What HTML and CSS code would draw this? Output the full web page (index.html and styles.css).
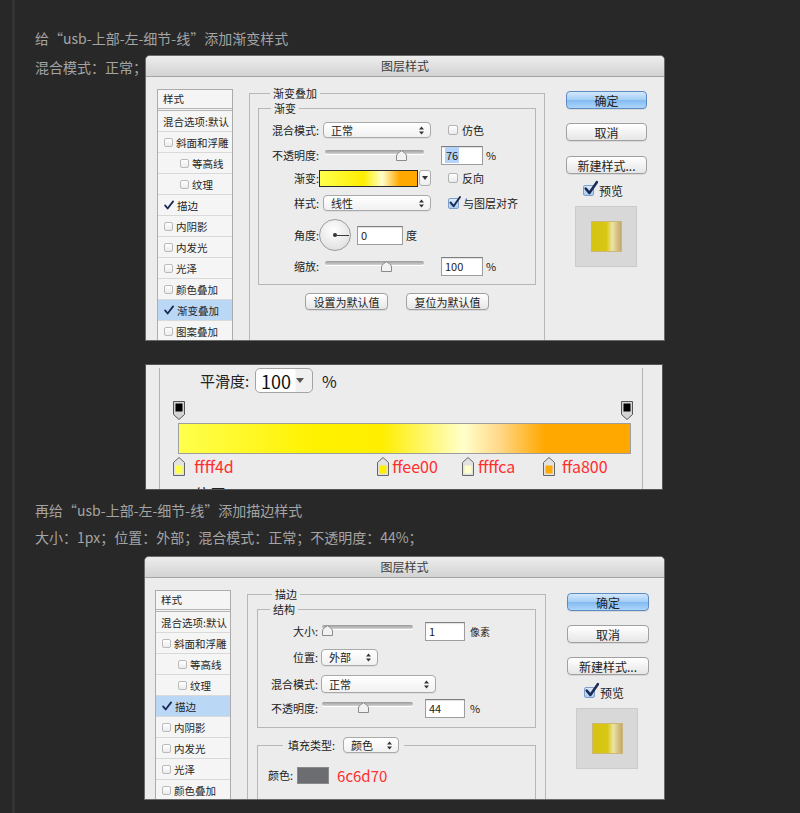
FILE: index.html
```html
<!DOCTYPE html>
<html lang="zh-CN">
<head>
<meta charset="utf-8">
<title>图层样式</title>
<link rel="stylesheet" href="styles.css">
</head>
<body>
<div class="page">
<div class="rail">
  <p class="note">给“usb-上部-左-细节-线”添加渐变样式</p>
  <div class="note-row">
    <p class="note note-side">混合模式：正常；</p>
    <div class="dialog dialog-1">
      <div class="titlebar">图层样式</div>
      <div class="dbody">
        <ul class="list">
          <li class="li li-head">样式</li>
          <li class="li">混合选项:默认</li>
          <li class="li"><span class="cb"></span>斜面和浮雕</li>
          <li class="li li-sub"><span class="cb"></span>等高线</li>
          <li class="li li-sub"><span class="cb"></span>纹理</li>
          <li class="li"><svg class="ck" viewBox="0 0 11 10"><path d="M1.2 5.4 L4 8.8 L10 1" /></svg>描边</li>
          <li class="li"><span class="cb"></span>内阴影</li>
          <li class="li"><span class="cb"></span>内发光</li>
          <li class="li"><span class="cb"></span>光泽</li>
          <li class="li"><span class="cb"></span>颜色叠加</li>
          <li class="li li-on"><svg class="ck" viewBox="0 0 11 10"><path d="M1.2 5.4 L4 8.8 L10 1" /></svg>渐变叠加</li>
          <li class="li li-last"><span class="cb"></span>图案叠加</li>
        </ul>
        <div class="main">
          <fieldset class="fs fs-outer">
            <legend>渐变叠加</legend>
            <fieldset class="fs fs-inner">
              <legend>渐变</legend>
              <div class="row">
                <span class="lbl">混合模式:</span>
                <div class="sel sel-mode"><span>正常</span><svg class="arr" viewBox="0 0 5 9"><path d="M0 3.6 L2.5 0.6 L5 3.6Z M0 5.4 L2.5 8.4 L5 5.4Z"/></svg></div>
                <span class="cbx cbx-gap"></span><span class="cbl">仿色</span>
              </div>
              <div class="row r-opacity">
                <span class="lbl">不透明度:</span>
                <div class="slider slider-1"><span class="track"></span><svg class="thumb" style="left:71px" viewBox="0 0 11 11"><path d="M0.5 10.5 V6 Q0.5 4 2.5 2.8 L5.5 0.7 L8.5 2.8 Q10.5 4 10.5 6 V10.5 Z"/></svg></div>
                <div class="inp inp-1"><span class="selected">76</span></div><span class="unit">%</span>
              </div>
              <div class="row r-grad">
                <span class="lbl">渐变:</span>
                <span class="grad-swatch"></span>
                <span class="grad-drop"><svg class="caret" viewBox="0 0 6 4"><path d="M0 0 H6 L3 4Z"/></svg></span>
                <span class="cbx cbx-gap"></span><span class="cbl">反向</span>
              </div>
              <div class="row r-style">
                <span class="lbl">样式:</span>
                <div class="sel sel-mode"><span>线性</span><svg class="arr" viewBox="0 0 5 9"><path d="M0 3.6 L2.5 0.6 L5 3.6Z M0 5.4 L2.5 8.4 L5 5.4Z"/></svg></div>
                <span class="cbx cbx-gap cbx-blue cbx-on"><svg class="ck2" viewBox="0 0 12 12"><path d="M1.5 6.5 L4.6 10.2 L11 1" /></svg></span><span class="cbl">与图层对齐</span>
              </div>
              <div class="row r-angle">
                <span class="lbl">角度:</span>
                <span class="dial"></span>
                <div class="inp inp-angle">0</div><span class="unit">度</span>
              </div>
              <div class="row r-scale">
                <span class="lbl">缩放:</span>
                <div class="slider slider-1"><span class="track"></span><svg class="thumb" style="left:56px" viewBox="0 0 11 11"><path d="M0.5 10.5 V6 Q0.5 4 2.5 2.8 L5.5 0.7 L8.5 2.8 Q10.5 4 10.5 6 V10.5 Z"/></svg></div>
                <div class="inp inp-1">100</div><span class="unit">%</span>
              </div>
            </fieldset>
            <div class="defaults">
              <div class="btn btn-sm">设置为默认值</div>
              <div class="btn btn-sm">复位为默认值</div>
            </div>
          </fieldset>
        </div>
        <div class="side">
          <div class="btn btn-primary">确定</div>
          <div class="btn btn-g1">取消</div>
          <div class="btn btn-g2">新建样式...</div>
          <div class="pv-row"><span class="cbx cbx-blue cbx-on"><svg class="ck3" viewBox="0 0 12 12"><path d="M1.5 6.5 L4.6 10.2 L11 1" /></svg></span><span class="pv-lbl">预览</span></div>
          <div class="pv-box"><span class="pv-swatch"></span></div>
        </div>
      </div>
    </div>
  </div>

  <div class="ge">
    <div class="ge-fs">
      <div class="smooth-row">
        <span class="smooth-lbl">平滑度:</span>
        <div class="smooth-sel"><span>100</span><svg class="caret2" viewBox="0 0 8 5"><path d="M0 0 H8 L4 5Z"/></svg></div>
        <span class="smooth-unit">%</span>
      </div>
      <div class="stops stops-top">
        <svg class="mk" style="--pos:0.3%" viewBox="0 0 12 19"><path d="M0.5 0.5 H11.5 V13.5 L6 18.5 L0.5 13.5 Z" fill="#d4d4d4" stroke="#555"/><rect x="2.5" y="2.5" width="7" height="8" fill="#000"/></svg>
        <svg class="mk" style="--pos:99.2%" viewBox="0 0 12 19"><path d="M0.5 0.5 H11.5 V13.5 L6 18.5 L0.5 13.5 Z" fill="#d4d4d4" stroke="#555"/><rect x="2.5" y="2.5" width="7" height="8" fill="#000"/></svg>
      </div>
      <div class="bar"></div>
      <div class="stops stops-bot">
        <div class="stop" style="--pos:0.3%;--gap:9px"><svg class="mk2" viewBox="0 0 12 19"><path d="M0.5 18.5 V5.5 L6 0.5 L11.5 5.5 V18.5 Z" fill="#e2e2e2" stroke="#666"/><rect x="2.5" y="8.5" width="7" height="8" fill="#ffff4d"/></svg><span class="hexr">ffff4d</span></div>
        <div class="stop" style="--pos:45.3%;--gap:3px"><svg class="mk2" viewBox="0 0 12 19"><path d="M0.5 18.5 V5.5 L6 0.5 L11.5 5.5 V18.5 Z" fill="#e2e2e2" stroke="#666"/><rect x="2.5" y="8.5" width="7" height="8" fill="#ffee00"/></svg><span class="hexr">ffee00</span></div>
        <div class="stop" style="--pos:64%;--gap:4px"><svg class="mk2" viewBox="0 0 12 19"><path d="M0.5 18.5 V5.5 L6 0.5 L11.5 5.5 V18.5 Z" fill="#e2e2e2" stroke="#666"/><rect x="2.5" y="8.5" width="7" height="8" fill="#ffffca"/></svg><span class="hexr">ffffca</span></div>
        <div class="stop" style="--pos:81.9%;--gap:7px"><svg class="mk2" viewBox="0 0 12 19"><path d="M0.5 18.5 V5.5 L6 0.5 L11.5 5.5 V18.5 Z" fill="#e2e2e2" stroke="#666"/><rect x="2.5" y="8.5" width="7" height="8" fill="#ffa800"/></svg><span class="hexr">ffa800</span></div>
      </div>
      <div class="cut-row"><span class="cut-text">位置:</span></div>
    </div>
  </div>

  <p class="note note-3">再给“usb-上部-左-细节-线”添加描边样式</p>
  <p class="note note-4">大小：1px；位置：外部；混合模式：正常；不透明度：44%；</p>

  <div class="dialog dialog-3">
    <div class="titlebar">图层样式</div>
    <div class="dbody">
      <ul class="list">
        <li class="li li-head">样式</li>
        <li class="li">混合选项:默认</li>
        <li class="li"><span class="cb"></span>斜面和浮雕</li>
        <li class="li li-sub"><span class="cb"></span>等高线</li>
        <li class="li li-sub"><span class="cb"></span>纹理</li>
        <li class="li li-on"><svg class="ck" viewBox="0 0 11 10"><path d="M1.2 5.4 L4 8.8 L10 1" /></svg>描边</li>
        <li class="li"><span class="cb"></span>内阴影</li>
        <li class="li"><span class="cb"></span>内发光</li>
        <li class="li"><span class="cb"></span>光泽</li>
        <li class="li li-last"><span class="cb"></span>颜色叠加</li>
      </ul>
      <div class="main">
        <fieldset class="fs fs-outer fs-outer-3">
          <legend>描边</legend>
          <fieldset class="fs fs-inner fs-inner-3">
            <legend>结构</legend>
            <div class="row">
              <span class="lbl">大小:</span>
              <div class="slider slider-3"><span class="track"></span><svg class="thumb" style="left:0px" viewBox="0 0 11 11"><path d="M0.5 10.5 V6 Q0.5 4 2.5 2.8 L5.5 0.7 L8.5 2.8 Q10.5 4 10.5 6 V10.5 Z"/></svg></div>
              <div class="inp inp-3">1</div><span class="unit unit-3 unit-px">像素</span>
            </div>
            <div class="row r3-pos">
              <span class="lbl">位置:</span>
              <div class="sel sel-pos"><span>外部</span><svg class="arr" viewBox="0 0 5 9"><path d="M0 3.6 L2.5 0.6 L5 3.6Z M0 5.4 L2.5 8.4 L5 5.4Z"/></svg></div>
            </div>
            <div class="row r3-mode">
              <span class="lbl">混合模式:</span>
              <div class="sel sel-mode3"><span>正常</span><svg class="arr" viewBox="0 0 5 9"><path d="M0 3.6 L2.5 0.6 L5 3.6Z M0 5.4 L2.5 8.4 L5 5.4Z"/></svg></div>
            </div>
            <div class="row r3-op">
              <span class="lbl">不透明度:</span>
              <div class="slider slider-3"><span class="track"></span><svg class="thumb" style="left:36px" viewBox="0 0 11 11"><path d="M0.5 10.5 V6 Q0.5 4 2.5 2.8 L5.5 0.7 L8.5 2.8 Q10.5 4 10.5 6 V10.5 Z"/></svg></div>
              <div class="inp inp-3">44</div><span class="unit unit-3">%</span>
            </div>
          </fieldset>
          <fieldset class="fs fs-fill">
            <legend><span class="fill-in"><span>填充类型:</span><span class="sel sel-fill"><span>颜色</span><svg class="arr" viewBox="0 0 5 9"><path d="M0 3.6 L2.5 0.6 L5 3.6Z M0 5.4 L2.5 8.4 L5 5.4Z"/></svg></span></span></legend>
            <div class="row">
              <span class="color-lbl">颜色:</span>
              <span class="color-swatch"></span>
              <span class="hex">6c6d70</span>
            </div>
          </fieldset>
        </fieldset>
      </div>
      <div class="side side-3">
        <div class="btn btn-primary">确定</div>
        <div class="btn btn-g1">取消</div>
        <div class="btn btn-g1">新建样式...</div>
        <div class="pv-row pv-row-3"><span class="cbx cbx-blue cbx-on"><svg class="ck3" viewBox="0 0 12 12"><path d="M1.5 6.5 L4.6 10.2 L11 1" /></svg></span><span class="pv-lbl">预览</span></div>
        <div class="pv-box"><span class="pv-swatch"></span></div>
      </div>
    </div>
  </div>
</div>
</div>
</body>
</html>
```
FILE: styles.css
```css
* { box-sizing: border-box; }
html, body { margin: 0; padding: 0; }
body {
  background: #282828;
  font-family: "Noto Sans CJK SC", "Noto Sans", sans-serif;
  color: #222;
}
.page { padding-left: 12px; }
.rail {
  min-height: 100vh;
  border-left: 3px solid #323232;
  padding: 28px 0 0 20px;
}
.note {
  margin: 0;
  font-size: 14px;
  line-height: 20px;
  color: #a4a4a4;
  white-space: nowrap;
}
.note-row { display: flex; align-items: flex-start; margin-top: 7px; }
.note-side { width: 110px; flex: none; overflow: hidden; padding-top: 2px; }
.note-3 { margin-top: 10px; }
.note-4 { margin-top: 7px; }

/* dialog */
.dialog {
  flex: none;
  background: #ececec;
  border: 1px solid #6a6a6a;
  border-radius: 5px 5px 0 0;
  overflow: hidden;
  display: flex;
  flex-direction: column;
}
.dialog-1 { width: 520px; height: 286px; }
.dialog-3 { width: 521px; height: 244px; margin: 9px 0 0 109px; }
.titlebar {
  flex: none;
  height: 21px;
  border-bottom: 1px solid #a4a4a4;
  background: linear-gradient(#ededed, #d3d3d3);
  font-size: 12px;
  line-height: 20px;
  text-align: center;
  color: #3c3c3c;
}
.dbody { display: flex; align-items: flex-start; padding: 12px 0 0 11px; }
.dialog-3 .dbody { padding-left: 10px; }

/* style list */
.list {
  flex: none;
  width: 76px;
  margin: 0;
  padding: 0;
  list-style: none;
  border: 1px solid #acacac;
  background: #f5f5f5;
}
.li {
  height: 21px;
  display: flex;
  align-items: center;
  gap: 3px;
  padding-left: 5px;
  border-bottom: 1px solid #d9d9d9;
  font-size: 10.5px;
  color: #262626;
  white-space: nowrap;
}
.li-last { height: 20px; border-bottom: 0; }
.li-head {
  align-items: flex-start;
  padding-top: 1px;
  border-bottom: 3px double #b3b3b3;
}
.li-sub { padding-left: 21px; }
.li .cb, .li .ck { margin-left: 1px; }
.li-on { background: #bbd7f6; }
.cb {
  flex: none;
  width: 9px;
  height: 9px;
  border: 1px solid #bababa;
  border-radius: 2px;
  background: linear-gradient(#fff, #ebebeb);
}
.ck { flex: none; width: 10px; height: 10px; overflow: visible; }
.ck path, .ck2 path, .ck3 path {
  fill: none;
  stroke: #1c2b57;
  stroke-width: 2;
  stroke-linecap: round;
  stroke-linejoin: round;
}

/* main fieldsets */
.main { flex: none; margin-left: 16px; margin-top: -3px; }
.fs {
  margin: 0;
  min-inline-size: 0;
  border: 1px solid #b7b7b7;
}
.fs legend {
  padding: 0 3px;
  margin-left: 12px;
  font-size: 11px;
  line-height: 14px;
  color: #222;
}
.fs-outer { width: 296px; padding: 0 8px 200px; }
.fs-outer-3 { width: 299px; padding: 0 9px 200px; }
.fs-outer-3 > legend { margin-left: 15px; }
.fs-inner { margin-top: 1px; padding: 5px 0 8px; }
.fs-inner-3 { padding: 5px 0 9px; }

.row { display: flex; align-items: center; height: 20px; font-size: 11px; }
.r-opacity { margin-top: 5px; }
.r-grad { margin-top: 3px; }
.r-style { margin-top: 5px; }
.r-angle { margin-top: 6px; height: 32px; }
.r-scale { margin-top: 5px; }
.r3-pos { margin-top: 6px; }
.r3-mode { margin-top: 7px; }
.r3-op { margin-top: 4px; }

.lbl { flex: none; width: 60px; text-align: right; white-space: nowrap; }

.sel {
  flex: none;
  display: flex;
  align-items: center;
  justify-content: space-between;
  height: 16px;
  padding: 0 6px 0 7px;
  border: 1px solid #a9a9a9;
  border-radius: 4px;
  background: linear-gradient(#ffffff, #f1f1f1);
  box-shadow: 0 1px 0 rgba(0, 0, 0, 0.06);
  font-size: 11px;
}
.sel-mode { width: 108px; margin-left: 4px; }
.sel-pos { width: 57px; height: 17px; margin-left: 3px; }
.sel-mode3 { width: 115px; height: 18px; margin-left: 3px; }
.sel-fill { width: 56px; margin-left: 8px; }
.arr { width: 5px; height: 9px; }
.arr path { fill: #333; }

.cbx {
  flex: none;
  position: relative;
  width: 10px;
  height: 10px;
  border: 1px solid #b3b3b3;
  border-radius: 2px;
  background: linear-gradient(#fff, #e9e9e9);
}
.cbx-gap { margin-left: 17px; }
.cbx-on .ck2 { position: absolute; left: 0; top: -3px; width: 12px; height: 12px; overflow: visible; }
.cbl { margin-left: 4px; font-size: 11px; white-space: nowrap; }

.slider { flex: none; position: relative; height: 20px; }
.slider-1 { width: 99px; margin-left: 6px; }
.slider-3 { width: 91px; margin-left: 4px; }
.track {
  display: block;
  margin-top: 5px;
  height: 4px;
  border-radius: 2px;
  background: linear-gradient(#9a9a9a, #d3d3d3);
  box-shadow: 0 1px 0 #fff;
}
.slider-3 .track { margin-top: 4px; }
.thumb { position: absolute; top: 5px; width: 11px; height: 11px; }
.slider-3 .thumb { top: 4px; }
.thumb path { fill: #f2f2f2; stroke: #8a8a8a; stroke-width: 1; }

.inp {
  flex: none;
  display: flex;
  align-items: center;
  height: 19px;
  padding-left: 3px;
  border: 1px solid #9d9d9d;
  border-top-color: #7e7e7e;
  background: #fff;
  box-shadow: inset 0 1px 1px rgba(0, 0, 0, 0.12);
  font-size: 11px;
}
.inp-1 { width: 42px; margin-left: 17px; }
.inp-angle { width: 46px; margin-left: 6px; }
.inp-3 { width: 40px; margin-left: 12px; }
.selected { background: #b3d3fb; padding: 0 1px; }
.unit { margin-left: 3px; font-size: 11px; }
.unit-3 { margin-left: 5px; }
.unit-px { font-size: 10px; }

.grad-swatch {
  flex: none;
  width: 99px;
  height: 17px;
  border: 1px solid #2a2a2a;
  background: linear-gradient(90deg, #ffff4d 0%, #ffee00 45%, #ffffca 64%, #ffa800 82%, #ffa800 100%);
}
.grad-drop {
  flex: none;
  display: flex;
  align-items: center;
  justify-content: center;
  width: 12px;
  height: 16px;
  margin-left: 1px;
  border: 1px solid #adadad;
  border-radius: 3px;
  background: linear-gradient(#fff, #eee);
}
.caret { width: 6px; height: 4px; }
.caret path { fill: #333; }

.dial {
  flex: none;
  position: relative;
  width: 32px;
  height: 32px;
  border-radius: 50%;
  border: 1px solid #9c9c9c;
  background: radial-gradient(circle at 45% 35%, #ffffff, #e4e4e4 70%, #d4d4d4);
}
.dial::after {
  content: "";
  position: absolute;
  left: 15px;
  top: 15px;
  width: 14px;
  height: 1px;
  background: #3a3a3a;
}
.dial::before {
  content: "";
  position: absolute;
  left: 13px;
  top: 13px;
  width: 4px;
  height: 4px;
  border-radius: 50%;
  background: #333;
}

.defaults { display: flex; justify-content: center; gap: 18px; margin-top: 8px; }
.btn {
  display: flex;
  align-items: center;
  justify-content: center;
  height: 18px;
  border: 1px solid #a0a0a0;
  border-radius: 4px;
  background: linear-gradient(#ffffff, #f3f3f3 50%, #e6e6e6);
  box-shadow: 0 1px 0 rgba(0, 0, 0, 0.08);
  font-size: 12px;
  color: #222;
  white-space: nowrap;
}
.btn-sm { width: 83px; height: 17px; font-size: 11px; }
.btn-primary {
  border-color: #5e8ac2;
  background: linear-gradient(#d3e8fc, #a3cdf5 50%, #84bbf1 52%, #acd6fa);
}
.btn-g1 { margin-top: 14px; }
.btn-g2 { margin-top: 15px; }

.side { flex: none; width: 81px; margin-left: 21px; margin-top: 2px; }
.side-3 { width: 82px; margin-top: 3px; }
.pv-row {
  display: flex;
  align-items: center;
  gap: 5px;
  height: 16px;
  margin-top: 8px;
  padding-left: 17px;
}
.pv-row-3 { margin-top: 9px; }
.cbx-blue {
  width: 11px;
  height: 11px;
  border-color: #7f9fc8;
  background: linear-gradient(#dbeafb, #a9cdf2);
}
.cbx-on .ck3 { position: absolute; left: 0; top: -5px; width: 14px; height: 14px; overflow: visible; }
.ck3 path { stroke-width: 2.2; }
.pv-lbl { font-size: 12px; }
.pv-box {
  display: flex;
  align-items: center;
  justify-content: center;
  width: 62px;
  height: 61px;
  margin: 8px 0 0 9px;
  border: 1px solid #cbcbcb;
  background: #d8d8d8;
}
.pv-swatch {
  width: 31px;
  height: 31px;
  border: 1px solid #c9b879;
  background: linear-gradient(90deg, #d5c30f 0%, #d9c716 50%, #ede4a3 70%, #d8c48a 85%, #c6a866 100%);
}

/* fill type */
.fs-fill { margin-top: 9px; padding: 12px 0 100px 10px; }
.fs-fill > legend { margin-left: 15px; padding: 0 5px; line-height: 16px; }
.fill-in { display: flex; align-items: center; height: 16px; font-size: 11px; }
.color-lbl { font-size: 11px; }
.color-swatch {
  width: 32px;
  height: 17px;
  margin-left: 4px;
  border: 1px solid #8a8a8a;
  background: #6c6d70;
}
.hex { margin-left: 8px; font-size: 15px; color: #ff2f2f; }

/* gradient editor crop */
.ge {
  width: 518px;
  height: 126px;
  margin: 23px 0 0 110px;
  background: #ececec;
  border: 1px solid #555;
  overflow: hidden;
}
.ge-fs {
  height: 100%;
  margin: 0 19px 0 13px;
  border-left: 1px solid #b3b3b3;
  border-right: 1px solid #b3b3b3;
}
.smooth-row {
  display: flex;
  align-items: center;
  height: 25px;
  margin-top: 3px;
  padding-left: 40px;
}
.smooth-lbl { width: 51px; font-size: 15px; color: #222; white-space: nowrap; }
.smooth-sel {
  display: flex;
  align-items: center;
  justify-content: space-between;
  width: 58px;
  height: 25px;
  margin-left: 4px;
  padding: 0 8px 0 5px;
  border: 1px solid #a3a3a3;
  border-radius: 5px;
  background: linear-gradient(90deg, #fff 70%, #f0f0f0 71%);
  font-size: 18px;
  color: #111;
}
.caret2 { width: 8px; height: 5px; }
.caret2 path { fill: #555; }
.smooth-unit { margin-left: 9px; font-size: 16px; }

.stops { position: relative; width: 453px; margin-left: 18px; }
.stops-top { height: 20px; margin-top: 8px; }
.mk {
  position: absolute;
  top: 0;
  left: calc(var(--pos) - 6px);
  width: 12px;
  height: 19px;
}
.bar {
  width: 453px;
  height: 31px;
  margin: 2px 0 0 18px;
  border: 1px solid #9d9d9d;
  background: linear-gradient(90deg, #ffff4d 0%, #fff200 30%, #ffee00 45%, #ffffca 63%, #ffd98a 71%, #ffa800 81%, #ffa800 100%);
}
.stops-bot { height: 21px; margin-top: 3px; }
.stop {
  position: absolute;
  top: 0;
  left: calc(var(--pos) - 6px);
  display: flex;
  align-items: center;
  height: 19px;
}
.mk2 { flex: none; width: 12px; height: 19px; }
.hexr {
  margin-left: var(--gap);
  font-size: 16px;
  line-height: 19px;
  color: #ff2f2f;
  white-space: nowrap;
}
.cut-row {
  height: 9px;
  margin-top: 4px;
  padding-left: 34px;
  overflow: hidden;
}
.cut-text {
  display: block;
  font-size: 16px;
  line-height: 20px;
  margin-top: 2px;
  color: #222;
}
```
